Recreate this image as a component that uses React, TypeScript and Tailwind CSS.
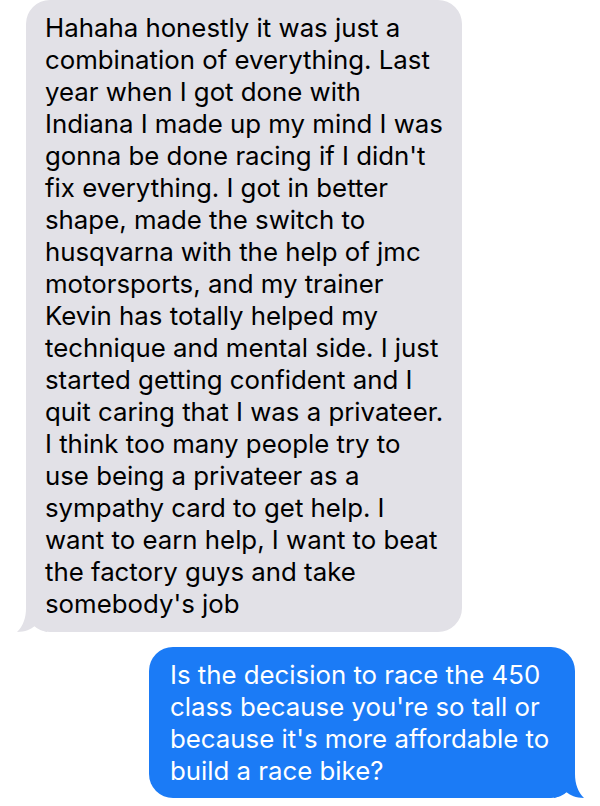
export default function App() {
    const received = [
        'Hahaha honestly it was just a',
        'combination of everything. Last',
        'year when I got done with',
        'Indiana I made up my mind I was',
        "gonna be done racing if I didn't",
        'fix everything. I got in better',
        'shape, made the switch to',
        'husqvarna with the help of jmc',
        'motorsports, and my trainer',
        'Kevin has totally helped my',
        'technique and mental side. I just',
        'started getting confident and I',
        'quit caring that I was a privateer.',
        'I think too many people try to',
        'use being a privateer as a',
        'sympathy card to get help. I',
        'want to earn help, I want to beat',
        'the factory guys and take',
        "somebody's job",
    ];

    const sent = [
        'Is the decision to race the 450',
        "class because you're so tall or",
        "because it's more affordable to",
        'build a race bike?',
    ];

    return (
        <div className="h-[806px] w-[600px] overflow-hidden bg-white font-['Inter',sans-serif] text-[25.8px] leading-[32px]">
            {/* Received bubble */}
            <div className="relative ml-[26px] w-[436px] rounded-[24px] bg-[#e2e1e7] pt-[12px] pb-[12px] pl-[19px] pr-[12px] text-black">
                {received.map((line, i) => (
                    <div key={i} className="whitespace-nowrap">
                        {line}
                    </div>
                ))}
                <svg className="absolute bottom-0 left-[-9px]" width="30" height="24" viewBox="0 0 30 24">
                    <path d="M9 0 C9 10 6 18 0 24 C8 24 14 21 18 18 C22 21 26 23 30 24 L30 0 Z" fill="#e2e1e7" />
                </svg>
            </div>

            {/* Sent bubble */}
            <div className="mt-[15px] flex justify-end pr-[25px]">
                <div className="relative w-[426px] rounded-[24px] bg-[#1b7bf6] pt-[12px] pb-[11px] pl-[21px] pr-[12px] text-white">
                    {sent.map((line, i) => (
                        <div key={i} className="whitespace-nowrap">
                            {line}
                        </div>
                    ))}
                    <svg className="absolute right-[-9px] bottom-0" width="30" height="24" viewBox="0 0 30 24">
                        <path d="M21 0 C21 10 24 18 30 24 C22 24 16 21 12 18 C8 21 4 23 0 24 L0 0 Z" fill="#1b7bf6" />
                    </svg>
                </div>
            </div>
        </div>
    );
}
